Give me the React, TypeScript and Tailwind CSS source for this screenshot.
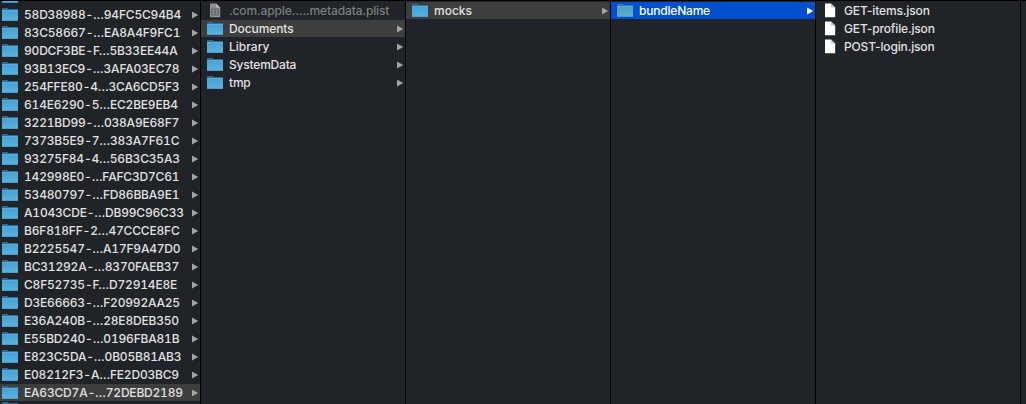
import React from "react";

type Kind = "folder" | "plist" | "file";
type State = "none" | "path" | "active";

interface Item {
  name: string;
  kind: Kind;
  state?: State;
  dim?: boolean;
  tracking?: string;
}

const devices: string[] = [
  "58D38988-…94FC5C94B4",
  "83C58667-…EA8A4F9FC1",
  "90DCF3BE-F…5B33EE44A",
  "93B13EC9-…3AFA03EC78",
  "254FFE80-4…3CA6CD5F3",
  "614E6290-5…EC2BE9EB4",
  "3221BD99-…038A9E68F7",
  "7373B5E9-7…383A7F61C",
  "93275F84-4…56B3C35A3",
  "142998E0-…FAFC3D7C61",
  "53480797-…FD86BBA9E1",
  "A1043CDE-…DB99C96C33",
  "B6F818FF-2…47CCCE8FC",
  "B2225547-…A17F9A47D0",
  "BC31292A-…8370FAEB37",
  "C8F52735-F…D72914E8E",
  "D3E66663-…F20992AA25",
  "E36A240B-…28E8DEB350",
  "E55BD240-…0196FBA81B",
  "E823C5DA-…0B05B81AB3",
  "E08212F3-A…FE2D03BC9",
  "EA63CD7A-…72DEBD2189",
];

function FolderIcon({ muted = false }: { muted?: boolean }) {
  const fill = muted ? "folder-muted" : "folder-plain";
  return (
    <svg width="16" height="13" viewBox="0 0 16 13" className="block shrink-0">
      <defs>
        <linearGradient id={fill} x1="0" y1="0" x2="0" y2="1">
          <stop offset="0" stopColor={muted ? "#4f9dc2" : "#46a1d6"} />
          <stop offset="1" stopColor={muted ? "#5db0cd" : "#5ab3dd"} />
        </linearGradient>
      </defs>
      <path d="M0 .5Q0 0 .6 0H5.2Q5.9 0 6.3.5L7 1H15.4Q16 1 16 1.6V4H0Z" fill={muted ? "#357a9d" : "#2c6e93"} />
      <rect x="0" y="2" width="16" height="11" rx=".3" fill={`url(#${fill})`} />
      <rect x="0" y="2" width="16" height="1" fill={muted ? "#60abcd" : "#58afdf"} />
      <rect x="0" y="12.2" width="16" height=".8" fill="#459ac2" />
    </svg>
  );
}

function FileIcon() {
  return (
    <svg width="16" height="15" viewBox="0 0 16 15" className="block shrink-0">
      <path d="M3 .5H9L13.2 4.5V14.2H3Z" fill="#fff" />
      <path d="M9 .5L13.2 4.5H9Z" fill="#c4c4c4" />
    </svg>
  );
}

function PlistIcon() {
  return (
    <svg width="16" height="15" viewBox="0 0 16 15" className="block shrink-0">
      <path d="M3 .5H9L13.2 4.5V14.2H3Z" fill="#8f9091" />
      <path d="M9 .5L13.2 4.5H9Z" fill="#b4b5b6" />
      <path d="M4.5 6H11.5V12H4.5ZM4.5 9H11.5M8 6V12" fill="none" stroke="#5c5d5f" strokeWidth=".9" />
    </svg>
  );
}

function Row({ item, inset }: { item: Item; inset: string }) {
  const state = item.state ?? "none";
  const bg = state === "active" ? "bg-[#0050d0]" : state === "path" ? "bg-[#3e3e3e]" : "";
  const color = item.dim ? "text-[#7c7e80]" : state === "active" ? "text-white" : "text-[#e0e1e1]";
  return (
    <div className="h-[18px] shrink-0">
      <div className={`flex h-[17px] items-center ${inset} ${bg} ${color}`}>
        {item.kind === "folder" && <FolderIcon muted={state === "active"} />}
        {item.kind === "file" && <FileIcon />}
        {item.kind === "plist" && <PlistIcon />}
        <span className={`ml-1.5 grow whitespace-nowrap ${item.tracking ?? "tracking-[-0.2px]"}`}>{item.name}</span>
        {item.kind === "folder" && (
          <svg width="7" height="8" viewBox="0 0 7 8" className="block shrink-0">
            <path d="M0 .5L6.2 4L0 7.5Z" fill={state === "active" ? "#fff" : "#a3a4a4"} />
          </svg>
        )}
      </div>
    </div>
  );
}

function Column({ items, inset, width }: { items: Item[]; inset: string; width: string }) {
  return (
    <div className={`${width} shrink-0 overflow-hidden border-r border-black pt-px`}>
      {items.map((item) => (
        <Row key={item.name} item={item} inset={inset} />
      ))}
    </div>
  );
}

export default function App() {
  return (
    <div className="flex h-[404px] w-[1026px] overflow-hidden border-t border-black bg-[#202327] font-['Inter','Liberation_Sans',sans-serif] text-[12px] leading-[17px] font-medium">
      <div className="flex w-[201px] shrink-0 flex-col overflow-hidden border-r border-black tabular-nums">
        <div className="flex h-[5px] shrink-0 items-start overflow-hidden pl-0.5">
          <div className="h-0.5 w-4 border-b border-[#3b91bd] bg-[#4ca9dc]" />
        </div>
        {devices.map((name, i) => (
          <Row
            key={name}
            item={{
              name,
              kind: "folder",
              state: i === devices.length - 1 ? "path" : "none",
              tracking: "tracking-[-0.2px]",
            }}
            inset="pl-0.5 pr-px"
          />
        ))}
        <div className="pl-0.5">
          <FolderIcon />
        </div>
      </div>
      <Column
        width="w-[205px]"
        inset="pl-1.5 pr-px"
        items={[
          { name: ".com.apple.….metadata.plist", kind: "plist", dim: true, tracking: "tracking-[-0.12px]" },
          { name: "Documents", kind: "folder", state: "path", tracking: "tracking-[-0.1px]" },
          { name: "Library", kind: "folder", tracking: "tracking-[0px]" },
          { name: "SystemData", kind: "folder" },
          { name: "tmp", kind: "folder" },
        ]}
      />
      <Column width="w-[205px]" inset="pl-1.5 pr-px" items={[{ name: "mocks", kind: "folder", state: "path", tracking: "tracking-[0px]" }]} />
      <Column width="w-[205px]" inset="pl-1.5 pr-px" items={[{ name: "bundleName", kind: "folder", state: "active" }]} />
      <Column
        width="w-[205px]"
        inset="pl-1.5 pr-px"
        items={[
          { name: "GET-items.json", kind: "file", tracking: "tracking-[-0.13px]" },
          { name: "GET-profile.json", kind: "file", tracking: "tracking-[-0.15px]" },
          { name: "POST-login.json", kind: "file", tracking: "tracking-[-0.15px]" },
        ]}
      />
    </div>
  );
}
